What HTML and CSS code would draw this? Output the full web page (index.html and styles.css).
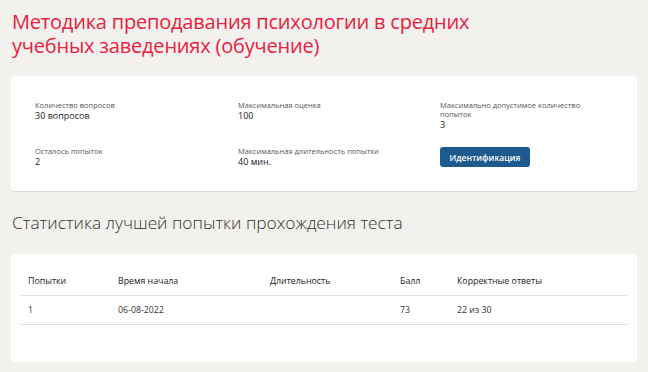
FILE: index.html
```html
<!DOCTYPE html>
<html>
<head>
    <link rel="stylesheet" href="styles.css">
</head>
<body>
    <h1 class="course-title">Методика преподавания психологии в средних учебных заведениях (обучение)</h1>

    <div class="card info-card">
        <div class="info-grid">
            <div class="info-item">
                <div class="info-label">Количество вопросов</div>
                <div class="info-value">30 вопросов</div>
            </div>
            <div class="info-item">
                <div class="info-label">Максимальная оценка</div>
                <div class="info-value">100</div>
            </div>
            <div class="info-item narrow">
                <div class="info-label">Максимально допустимое количество попыток</div>
                <div class="info-value">3</div>
            </div>
            <div class="info-item">
                <div class="info-label">Осталось попыток</div>
                <div class="info-value">2</div>
            </div>
            <div class="info-item">
                <div class="info-label">Максимальная длительность попытки</div>
                <div class="info-value">40 мин.</div>
            </div>
            <div class="info-item">
                <button class="btn-ident">Идентификация</button>
            </div>
        </div>
    </div>

    <h2 class="section-title">Статистика лучшей попытки прохождения теста</h2>

    <div class="card stats-card">
        <table class="stats-table">
            <thead>
                <tr>
                    <th class="col-try">Попытки</th>
                    <th class="col-start">Время начала</th>
                    <th class="col-dur">Длительность</th>
                    <th class="col-score">Балл</th>
                    <th>Корректные ответы</th>
                </tr>
            </thead>
            <tbody>
                <tr>
                    <td>1</td>
                    <td>06-08-2022</td>
                    <td></td>
                    <td>73</td>
                    <td>22 из 30</td>
                </tr>
            </tbody>
        </table>
    </div>
</body>
</html>
```

FILE: styles.css
```css
body {
    margin: 0;
    padding: 0 11px;
    background-color: #f2f1ee;
    font-family: "Open Sans", "Noto Sans", sans-serif;
    color: #333;
}
.course-title {
    margin: 0;
    padding: 10px 0 0 1px;
    max-width: 470px;
    font-size: 20px;
    line-height: 24px;
    font-weight: 500;
    color: #e8213f;
    letter-spacing: -0.2px;
}
.card {
    background: #fff;
    border-radius: 3px;
    box-shadow: 0 1px 1px rgba(0, 0, 0, 0.1);
}
.info-card {
    margin-top: 18px;
    padding: 25px 24px 23px;
}
.info-grid {
    display: grid;
    grid-template-columns: 203px 202px 1fr;
    row-gap: 16px;
}
.info-item.narrow {
    max-width: 160px;
}
.info-label {
    font-size: 7.5px;
    line-height: 9px;
    color: #555;
}
.info-value {
    font-size: 9px;
    line-height: 12px;
    font-weight: 500;
    color: #222;
}
.btn-ident {
    display: block;
    width: 90px;
    height: 20px;
    border: none;
    border-radius: 3px;
    background: #1d5a8d;
    color: #fff;
    font-family: inherit;
    font-size: 8.5px;
    font-weight: 600;
    padding: 0;
}
.section-title {
    margin: 0;
    padding: 20px 0 19px 1px;
    font-size: 17.3px;
    line-height: 24px;
    font-weight: 300;
    color: #333;
}
.stats-card {
    padding: 13px 10px 37px;
}
.stats-table {
    width: 100%;
    border-collapse: collapse;
    font-size: 8.8px;
    color: #333;
}
.stats-table th,
.stats-table td {
    text-align: left;
    padding: 0 7px;
    height: 28px;
    border-bottom: 1px solid #dedede;
}
.stats-table th {
    font-weight: 500;
    color: #222;
}
.col-try { width: 76px; }
.col-start { width: 138px; }
.col-dur { width: 116px; }
.col-score { width: 43px; }
```
